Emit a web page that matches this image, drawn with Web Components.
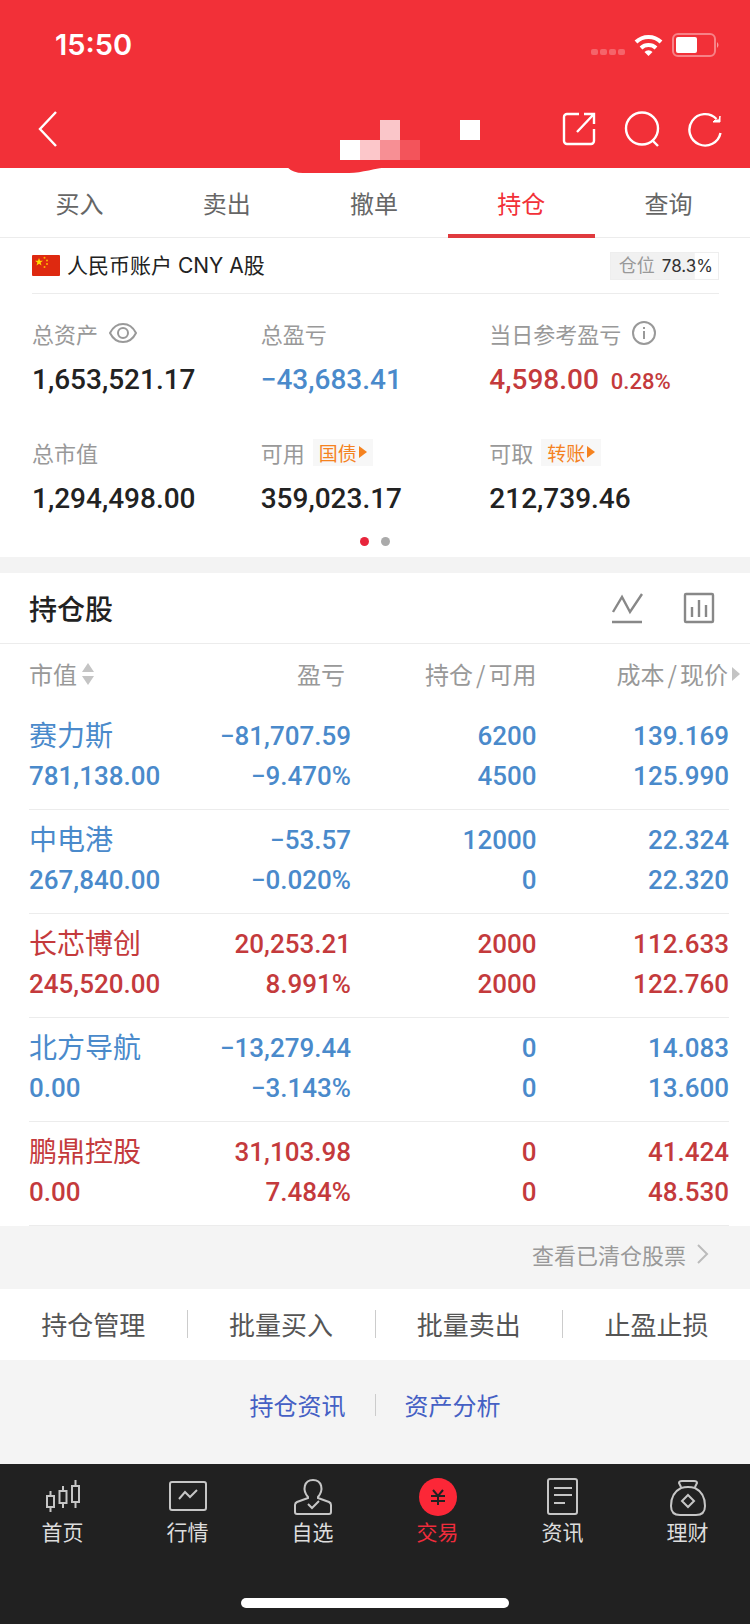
<!DOCTYPE html>
<html lang="zh-CN">
<head>
<meta charset="utf-8">
<meta name="viewport" content="width=device-width, initial-scale=1">
<title>持仓</title>
<style>
  body {
    margin: 0;
    background-color: #f4f4f4;
    color: #222;
    font-family: "Noto Sans CJK SC", sans-serif;
    font-size: 24px;
    --num-font: Roboto, "Noto Sans CJK SC", sans-serif;
    --red: #f23038;
    --up: #c43a3c;
    --down: #4a8acb;
    --line: #ececec;
  }
</style>
</head>
<body>

<trade-page>
  <status-bar slot="top" time="15:50"></status-bar>
  <nav-bar slot="top"></nav-bar>

  <tab-strip>
    <tab-link>买入</tab-link>
    <tab-link>卖出</tab-link>
    <tab-link>撤单</tab-link>
    <tab-link active>持仓</tab-link>
    <tab-link>查询</tab-link>
  </tab-strip>

  <account-bar position="78.3%">人民币账户 CNY A股</account-bar>

  <asset-panel>
    <asset-item label="总资产" value="1,653,521.17" icon="eye"></asset-item>
    <asset-item label="总盈亏" value="−43,683.41" trend="down"></asset-item>
    <asset-item label="当日参考盈亏" value="4,598.00" rate="0.28%" trend="up" icon="info"></asset-item>
    <asset-item label="总市值" value="1,294,498.00"></asset-item>
    <asset-item label="可用" value="359,023.17" action="国债"></asset-item>
    <asset-item label="可取" value="212,739.46" action="转账"></asset-item>
  </asset-panel>

  <holdings-panel>持仓股</holdings-panel>
  <cleared-link>查看已清仓股票</cleared-link>

  <action-bar>
    <button>持仓管理</button>
    <button>批量买入</button>
    <button>批量卖出</button>
    <button>止盈止损</button>
  </action-bar>

  <quick-links>
    <a href="#">持仓资讯</a>
    <a href="#">资产分析</a>
  </quick-links>

  <bottom-nav slot="bottom">
    <bottom-item icon="home">首页</bottom-item>
    <bottom-item icon="market">行情</bottom-item>
    <bottom-item icon="favorite">自选</bottom-item>
    <bottom-item icon="trade" active>交易</bottom-item>
    <bottom-item icon="news">资讯</bottom-item>
    <bottom-item icon="wealth">理财</bottom-item>
  </bottom-nav>
</trade-page>

<script>
class BaseElement extends HTMLElement {
  constructor() {
    super();
    this.root = this.attachShadow({mode: 'open'});
  }

  connectedCallback() {
    this.root.innerHTML = this.render();
  }
}

const reset = /*css*/ `
  * { box-sizing: border-box; }
  a { color: inherit; text-decoration: none; }
  button {
    margin: 0;
    padding: 0;
    border: 0;
    background: none;
    color: inherit;
    font: inherit;
    cursor: pointer;
  }
  svg { display: block; flex: none; }
`;

customElements.define('trade-page', class extends BaseElement {
  render() {
    return /*html*/ `
<style>
  :host {
    display: flex;
    flex-direction: column;
    min-height: 100vh;
  }
  header { background-color: var(--red); color: #fff; }
  main { flex: 1; }
</style>
<header><slot name="top"></slot></header>
<main><slot></slot></main>
<slot name="bottom"></slot>`;
  }
});

customElements.define('status-bar', class extends BaseElement {
  render() {
    return /*html*/ `
<style>
  ${reset}
  :host {
    display: flex;
    align-items: center;
    justify-content: space-between;
    height: 90px;
    padding: 0 30px 0 55px;
    font: 600 29px/32px Inter, sans-serif;
  }
  .signals { display: flex; align-items: center; gap: 9px; }
</style>
<span>${this.getAttribute('time')}</span>
<div class="signals">
  <svg width="34" height="22" viewBox="0 0 34 22" fill="#fff" opacity=".25">
    <rect x="0" y="15" width="7" height="6" rx="2"/>
    <rect x="9" y="15" width="7" height="6" rx="2"/>
    <rect x="18" y="15" width="7" height="6" rx="2"/>
    <rect x="27" y="15" width="7" height="6" rx="2"/>
  </svg>
  <svg width="29" height="22" viewBox="0 0 29 22" fill="none" stroke="#fff" stroke-width="4">
    <path d="M2 8a18 18 0 0 1 25 0"/>
    <path d="M7 14a11 11 0 0 1 15 0"/>
    <path d="M14.500 22l-4-4a5.500 5.500 0 0 1 8 0z" fill="#fff" stroke="none"/>
  </svg>
  <svg width="48" height="24" viewBox="0 0 48 24">
    <rect x="1" y="1" width="42" height="22" rx="5" fill="none" stroke="#fff" stroke-opacity=".4" stroke-width="2"/>
    <rect x="4" y="4" width="21" height="16" rx="2" fill="#fff"/>
    <path d="M45 9q3 3 0 6z" fill="#fff" opacity=".5"/>
  </svg>
</div>`;
  }
});

customElements.define('nav-bar', class extends BaseElement {
  render() {
    return /*html*/ `
<style>
  ${reset}
  :host {
    display: flex;
    align-items: center;
    height: 78px;
    padding: 0 28px 0 37px;
    position: relative;
  }
  .tools {
    display: flex;
    align-items: center;
    gap: 28px;
    margin-left: auto;
  }
  /* masked account name, hangs a little over the tabs */
  .mask {
    position: absolute;
    left: 50%;
    top: 30px;
    margin-left: -88px;
  }
</style>
<button aria-label="返回">
  <svg width="22" height="36" viewBox="0 0 22 36" fill="none" stroke="#fff" stroke-width="2.400"><path d="M19 1L3 18l16 17"/></svg>
</button>
<svg class="mask" width="200" height="53" viewBox="0 0 200 53">
  <path d="M0 47h106c-20 1-30 6-44 6H16q-10 0-16-6z" fill="#f23038"/>
  <rect x="53" y="20" width="20" height="20" fill="#fff"/>
  <rect x="73" y="20" width="20" height="20" fill="#fcc7ca"/>
  <rect x="93" y="0" width="20" height="20" fill="#fac6c9"/>
  <rect x="93" y="20" width="20" height="20" fill="#f78f94"/>
  <rect x="113" y="20" width="20" height="20" fill="#f3545b"/>
  <rect x="173" y="0" width="20" height="20" fill="#fff"/>
</svg>
<div class="tools">
  <button aria-label="分享">
    <svg width="34" height="36" viewBox="0 0 34 36" fill="none" stroke="#fff" stroke-width="2.400">
      <path d="M17 3H5a3 3 0 0 0-3 3v24a3 3 0 0 0 3 3h24a3 3 0 0 0 3-3V18M22 3h10v10M31.500 3.500L15 21"/>
    </svg>
  </button>
  <button aria-label="搜索">
    <svg width="36" height="36" viewBox="0 0 36 36" fill="none" stroke="#fff" stroke-width="2.400">
      <circle cx="18" cy="17.500" r="16"/><path d="M28 29l6 6"/>
    </svg>
  </button>
  <button aria-label="刷新">
    <svg width="34" height="36" viewBox="0 0 34 36" fill="none" stroke="#fff" stroke-width="2.400">
      <path d="M28.500 8A15.700 15.700 0 1 0 32.500 22"/><path d="M32 5v6h-7l2-2h4z" fill="#fff" stroke-width="1"/>
    </svg>
  </button>
</div>`;
  }
});

customElements.define('tab-strip', class extends BaseElement {
  render() {
    return /*html*/ `
<style>
  :host {
    display: flex;
    height: 70px;
    padding: 0 8px 0 6px;
    background-color: #fff;
    border-bottom: 1px solid var(--line);
    box-sizing: border-box;
  }
</style>
<slot></slot>`;
  }
});

customElements.define('tab-link', class extends BaseElement {
  render() {
    return /*html*/ `
<style>
  ${reset}
  :host { display: block; flex: 1; color: #666; }
  :host([active]) { color: var(--red); }
  a {
    display: block;
    height: 70px;
    line-height: 70px;
    text-align: center;
  }
  :host([active]) a { border-bottom: 4px solid #e03a3e; }
</style>
<a href="#"><slot></slot></a>`;
  }
});

customElements.define('account-bar', class extends BaseElement {
  render() {
    const position = this.getAttribute('position');
    return /*html*/ `
<style>
  ${reset}
  :host {
    display: block;
    padding: 0 31px 0 32px;
    background-color: #fff;
    font: 21px/32px Inter, "Noto Sans CJK SC", sans-serif;
  }
  .row {
    display: flex;
    align-items: center;
    gap: 7px;
    height: 56px;
    border-bottom: 1px solid var(--line);
  }
  .position {
    margin-left: auto;
    padding: 0 5px 0 8px;
    border: 1px solid #eee;
    background: linear-gradient(#f1f1f1, #f1f1f1) no-repeat 0 0 / ${position} 100%;
    color: #999;
    font-size: 18px;
    line-height: 26px;
  }
  b { margin-left: 2px; color: #333; font-size: 17px; font-weight: 400; }
</style>
<div class="row">
  <svg width="28" height="21" viewBox="0 0 28 21">
    <rect width="28" height="21" rx="1" fill="#de2910"/>
    <path d="M7 3l1 2.800h3L8.600 7.500l.9 2.900L7 8.700l-2.500 1.700.9-2.900L3 5.800h3z" fill="#ffde00"/>
    <g fill="#ffb300"><circle cx="12.500" cy="2.800" r="1"/><circle cx="15" cy="5.500" r="1"/><circle cx="15" cy="9" r="1"/><circle cx="12.500" cy="12" r="1"/></g>
  </svg>
  <slot></slot>
  <span class="position">仓位 <b>${position}</b></span>
</div>`;
  }
});

customElements.define('asset-panel', class extends BaseElement {
  render() {
    return /*html*/ `
<style>
  :host {
    display: block;
    padding: 23px 32px 11px;
    background-color: #fff;
    border-bottom: 16px solid #f3f3f3;
  }
  .grid {
    display: grid;
    grid-template-columns: 1fr 1fr 1fr;
    row-gap: 36px;
  }
  .dots {
    display: flex;
    justify-content: center;
    gap: 12px;
    margin-top: 18px;
  }
  i { width: 9px; height: 9px; border-radius: 50%; background-color: #aaa; }
  .on { background-color: #e8253c; }
</style>
<div class="grid"><slot></slot></div>
<div class="dots"><i class="on"></i><i></i></div>`;
  }
});

const assetIcons = {
  eye: `<svg class="icon" width="28" height="22" viewBox="0 0 28 22" fill="none" stroke="#999" stroke-width="2"><path d="M1 11C7-1 21-1 27 11 21 23 7 23 1 11z"/><circle cx="14" cy="11" r="5"/></svg>`,
  info: `<svg class="icon" width="24" height="24" viewBox="0 0 24 24" fill="none" stroke="#999" stroke-width="2"><circle cx="12" cy="12" r="11"/><path d="M12 10v8M12 6v2"/></svg>`
};

customElements.define('asset-item', class extends BaseElement {
  render() {
    const icon = this.getAttribute('icon');
    const action = this.getAttribute('action');
    const rate = this.getAttribute('rate');
    return /*html*/ `
<style>
  ${reset}
  :host { display: block; white-space: nowrap; }
  :host([trend=up]) .value { color: var(--up); }
  :host([trend=down]) .value { color: var(--down); }
  .label {
    display: flex;
    align-items: center;
    gap: 8px;
    height: 32px;
    color: #999;
    font-size: 22px;
    line-height: 32px;
  }
  .icon { margin-left: 3px; }
  .action {
    display: flex;
    align-items: center;
    gap: 2px;
    padding: 0 6px;
    background-color: #f7f7f7;
    color: #f5821f;
    font-size: 19px;
    line-height: 27px;
  }
  .value {
    margin-top: 11px;
    font: 500 28px/40px var(--num-font);
  }
  small { margin-left: 5px; font-size: 22px; line-height: 1; }
</style>
<div class="label">
  <span>${this.getAttribute('label')}</span>
  ${icon ? assetIcons[icon] : ''}
  ${action ? `<button class="action">${action}<svg width="8" height="12" viewBox="0 0 8 12"><path d="M0 0l8 6-8 6z" fill="#f5821f"/></svg></button>` : ''}
</div>
<div class="value">${this.getAttribute('value')}${rate ? ` <small>${rate}</small>` : ''}</div>`;
  }
});

const holdings = [
  {name: '赛力斯', value: '781,138.00', profit: '−81,707.59', rate: '−9.470%', total: '6200', free: '4500', cost: '139.169', price: '125.990'},
  {name: '中电港', value: '267,840.00', profit: '−53.57', rate: '−0.020%', total: '12000', free: '0', cost: '22.324', price: '22.320'},
  {name: '长芯博创', value: '245,520.00', profit: '20,253.21', rate: '8.991%', total: '2000', free: '2000', cost: '112.633', price: '122.760'},
  {name: '北方导航', value: '0.00', profit: '−13,279.44', rate: '−3.143%', total: '0', free: '0', cost: '14.083', price: '13.600'},
  {name: '鹏鼎控股', value: '0.00', profit: '31,103.98', rate: '7.484%', total: '0', free: '0', cost: '41.424', price: '48.530'}
];

customElements.define('holdings-panel', class extends BaseElement {
  row(h) {
    return /*html*/ `
<tr class="${h.profit.startsWith('−') ? 'down' : 'up'}">
  <td><span class="name">${h.name}</span><span>${h.value}</span></td>
  <td><span>${h.profit}</span><span>${h.rate}</span></td>
  <td><span>${h.total}</span><span>${h.free}</span></td>
  <td><span>${h.cost}</span><span>${h.price}</span></td>
</tr>`;
  }

  render() {
    return /*html*/ `
<style>
  ${reset}
  :host { display: block; background-color: #fff; }
  .head {
    display: flex;
    align-items: center;
    gap: 40px;
    height: 71px;
    padding: 0 35px 0 29px;
    border-bottom: 1px solid var(--line);
  }
  h2 {
    flex: 1;
    margin: 0;
    font-size: 28px;
    font-weight: 500;
    line-height: 40px;
  }
  .wrap { padding: 0 21px 0 29px; }
  table {
    width: 100%;
    table-layout: fixed;
    border-collapse: collapse;
    text-align: right;
    white-space: nowrap;
  }
  th {
    height: 62px;
    padding: 0 0 2px;
    color: #999;
    font-weight: 400;
    line-height: 36px;
  }
  th:nth-child(1) { width: 23%; }
  th:nth-child(2) { width: 23%; padding-right: 6px; }
  th:nth-child(3) { width: 26.5%; }
  th div { display: flex; align-items: center; gap: 5px; }
  th .more { justify-content: flex-end; gap: 4px; margin-right: -11px; }
  i { padding: 0 3px; font-style: normal; }
  th:first-child, td:first-child { text-align: left; }
  td {
    padding: 10px 0 13px;
    border-bottom: 1px solid var(--line);
    font: 500 26px/40px var(--num-font);
  }
  td span { display: block; }
  .name {
    height: 40px;
    font: 400 28px/36px "Noto Sans CJK SC", sans-serif;
  }
  .up { color: var(--up); }
  .down { color: var(--down); }
</style>
<div class="head">
  <h2><slot></slot></h2>
  <button aria-label="走势">
    <svg width="32" height="32" viewBox="0 0 32 32" fill="none" stroke="#888" stroke-width="2.400"><path d="M2 20l9-15 8 15L31 2M1 30h30"/></svg>
  </button>
  <button aria-label="统计">
    <svg width="32" height="32" viewBox="0 0 32 32" fill="none" stroke="#888" stroke-width="2.400"><rect x="2" y="2" width="28" height="28" rx="1"/><path d="M9 15v10M16 8v17M23 13v12"/></svg>
  </button>
</div>
<div class="wrap">
<table>
  <thead>
    <tr>
      <th scope="col"><div>市值<svg width="12" height="24" viewBox="0 0 12 24" fill="#c4c4c4"><path d="M6 1l6 9H0zM6 23l6-9H0z"/></svg></div></th>
      <th scope="col">盈亏</th>
      <th scope="col">持仓<i>/</i>可用</th>
      <th scope="col"><div class="more"><span>成本<i>/</i>现价</span><svg width="8" height="14" viewBox="0 0 8 14" fill="#c4c4c4"><path d="M0 0l8 7-8 7z"/></svg></div></th>
    </tr>
  </thead>
  <tbody>${holdings.map(this.row).join('')}</tbody>
</table>
</div>`;
  }
});

customElements.define('cleared-link', class extends BaseElement {
  render() {
    return /*html*/ `
<style>
  ${reset}
  :host { display: block; background-color: #f4f4f4; color: #999; font-size: 22px; }
  a {
    display: flex;
    align-items: center;
    justify-content: flex-end;
    gap: 11px;
    height: 63px;
    padding: 0 41px 8px;
  }
</style>
<a href="#"><slot></slot><svg width="12" height="20" viewBox="0 0 12 20" fill="none" stroke="#bbb" stroke-width="2"><path d="M1 1l9 9-9 9"/></svg></a>`;
  }
});

customElements.define('action-bar', class extends BaseElement {
  render() {
    return /*html*/ `
<style>
  :host { display: flex; padding: 21px 0 22px; background-color: #fff; }
  ::slotted(button) {
    flex: 1;
    margin: 0;
    padding: 0;
    border: 0;
    border-right: 1px solid #ccc;
    background: none;
    color: #555;
    font: 26px/28px "Noto Sans CJK SC", sans-serif;
  }
  ::slotted(button:last-child) { border-right: 0; }
</style>
<slot></slot>`;
  }
});

customElements.define('quick-links', class extends BaseElement {
  render() {
    return /*html*/ `
<style>
  :host { display: flex; justify-content: center; padding: 34px 0 48px; }
  ::slotted(a) {
    padding: 0 29px;
    color: #4560c4;
    line-height: 22px;
    text-decoration: none;
  }
  ::slotted(a:first-child) { border-right: 1px solid #ccc; }
</style>
<slot></slot>`;
  }
});

customElements.define('bottom-nav', class extends BaseElement {
  render() {
    return /*html*/ `
<style>
  :host { display: block; padding: 13px 0 16px; background-color: #212121; color: #ddd; }
  nav { display: flex; }
  .home {
    width: 268px;
    height: 10px;
    margin: 53px auto 0;
    border-radius: 5px;
    background-color: #fff;
  }
</style>
<nav><slot></slot></nav>
<div class="home"></div>`;
  }
});

const navIcons = {
  home: `<path d="M5 19h7v11H5zM8.500 14v5M8.500 30v5M17.500 14h7v12h-7zM21 9v5M21 26v5M30 9h7v16h-7zM33.500 3v6M33.500 25v6"/>`,
  market: `<rect x="3" y="5" width="36" height="28" rx="2"/><path d="M12 22l6-7 5 5 7-7"/>`,
  favorite: `<path d="M16 20C10 13 12 3 21 3s11 10 5 17v1l11 4q2 1 2 3v7a2 2 0 0 1-2 2H5a2 2 0 0 1-2-2v-7q0-2 2-3l11-4z"/><path d="M16 27l4 4 7-7"/>`,
  trade: `<circle cx="21" cy="20" r="19" fill="#fc2737" stroke="none"/><path d="M16 13l5 6 5-6M14 19h14M14 24h14M21 19v9" stroke="#212121"/>`,
  news: `<rect x="6" y="2" width="29" height="35" rx="2"/><path d="M12 11h18M12 18h18M12 26h11"/>`,
  wealth: `<path d="M14 10l-2-4q0-2 3-2h12q3 0 3 2l-2 4M14 11q7-2 14 0M14 11C6 15 4 23 4 29q0 9 9 9h16q9 0 9-9c0-6-2-14-10-18"/><path d="M21 18l6 6-6 6-6-6z"/>`
};

customElements.define('bottom-item', class extends BaseElement {
  render() {
    return /*html*/ `
<style>
  ${reset}
  :host { display: block; flex: 1; font-size: 21px; }
  :host([active]) { color: #f02c3c; }
  a {
    display: flex;
    flex-direction: column;
    align-items: center;
    line-height: 28px;
  }
</style>
<a href="#">
  <svg width="42" height="40" viewBox="0 0 42 40" fill="none" stroke="#c6c6c6" stroke-width="2">${navIcons[this.getAttribute('icon')]}</svg>
  <slot></slot>
</a>`;
  }
});
</script>
</body>
</html>
